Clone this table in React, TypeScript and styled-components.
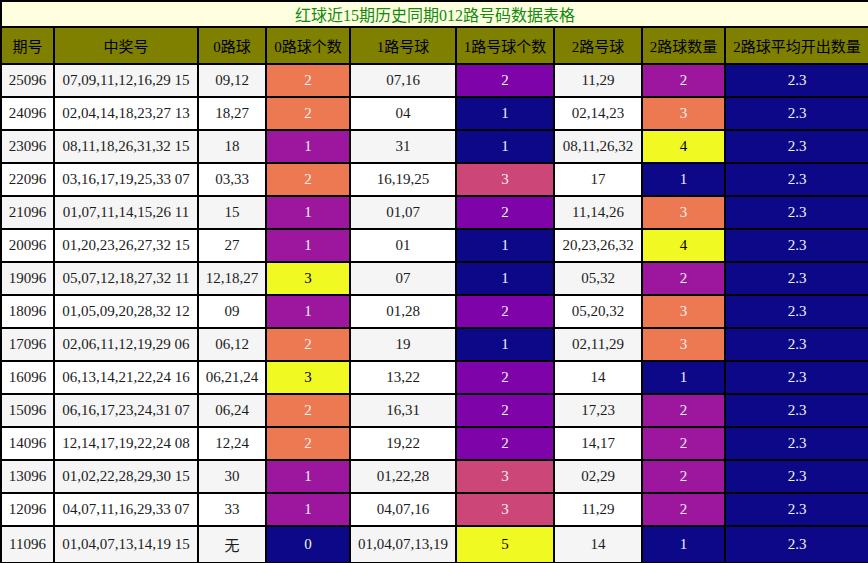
import React from "react";
import styled, { createGlobalStyle } from "styled-components";

const Global = createGlobalStyle`
  html, body { margin: 0; padding: 0; background: #ffffff; }
  body { font-family: "Liberation Serif", "Noto Sans CJK SC", serif; }
`;

const Table = styled.table`
  width: 868px;
  border-collapse: collapse;
  table-layout: fixed;
  font-family: "Liberation Serif", "Noto Sans CJK SC", serif;
  font-size: 15px;
`;

const Col = styled.col<{ $w: number }>`
  width: ${(p) => p.$w}px;
`;

const TitleCell = styled.th`
  border: 2px solid #000;
  background: #ffffe0;
  color: #108a10;
  font-size: 16px;
  font-weight: normal;
  padding: 0;
  text-align: center;
`;

const HeadCell = styled.th`
  border: 2px solid #000;
  background: #808000;
  color: #000;
  font-weight: normal;
  padding: 7px 0;
  text-align: center;
  white-space: nowrap;
`;

const Row = styled.tr<{ $alt: boolean; $tall?: boolean }>`
  height: ${(p) => (p.$tall ? 37 : 33)}px;
  background: ${(p) => (p.$alt ? "#f5f5f5" : "#ffffff")};
`;

const Cell = styled.td<{ $bg?: string; $fg?: string }>`
  border: 2px solid #000;
  padding: 0;
  text-align: center;
  white-space: nowrap;
  color: ${(p) => p.$fg || "#1c1c1c"};
  background: ${(p) => p.$bg || "transparent"};
`;

const PLASMA = {
  navy: "#0d0887",
  purple: "#7e03a8",
  magenta: "#9c179e",
  pink: "#cc4778",
  orange: "#ed7953",
  yellow: "#f0f921",
};

type Level = keyof typeof PLASMA;

function zeroColor(v: number): Level {
  return (["navy", "magenta", "orange", "yellow"] as Level[])[v];
}
function oneColor(v: number): Level {
  const m: Record<number, Level> = { 1: "navy", 2: "purple", 3: "pink", 4: "orange", 5: "yellow" };
  return m[v];
}
function twoColor(v: number): Level {
  const m: Record<number, Level> = { 1: "navy", 2: "magenta", 3: "orange", 4: "yellow" };
  return m[v];
}

type Rec = [string, string, string, number, string, number, string, number];

const data: Rec[] = [
  ["25096", "07,09,11,12,16,29 15", "09,12", 2, "07,16", 2, "11,29", 2],
  ["24096", "02,04,14,18,23,27 13", "18,27", 2, "04", 1, "02,14,23", 3],
  ["23096", "08,11,18,26,31,32 15", "18", 1, "31", 1, "08,11,26,32", 4],
  ["22096", "03,16,17,19,25,33 07", "03,33", 2, "16,19,25", 3, "17", 1],
  ["21096", "01,07,11,14,15,26 11", "15", 1, "01,07", 2, "11,14,26", 3],
  ["20096", "01,20,23,26,27,32 15", "27", 1, "01", 1, "20,23,26,32", 4],
  ["19096", "05,07,12,18,27,32 11", "12,18,27", 3, "07", 1, "05,32", 2],
  ["18096", "01,05,09,20,28,32 12", "09", 1, "01,28", 2, "05,20,32", 3],
  ["17096", "02,06,11,12,19,29 06", "06,12", 2, "19", 1, "02,11,29", 3],
  ["16096", "06,13,14,21,22,24 16", "06,21,24", 3, "13,22", 2, "14", 1],
  ["15096", "06,16,17,23,24,31 07", "06,24", 2, "16,31", 2, "17,23", 2],
  ["14096", "12,14,17,19,22,24 08", "12,24", 2, "19,22", 2, "14,17", 2],
  ["13096", "01,02,22,28,29,30 15", "30", 1, "01,22,28", 3, "02,29", 2],
  ["12096", "04,07,11,16,29,33 07", "33", 1, "04,07,16", 3, "11,29", 2],
  ["11096", "01,04,07,13,14,19 15", "无", 0, "01,04,07,13,19", 5, "14", 1],
];

const widths = [53, 144, 68, 84, 106, 98, 88, 83, 144];
const heads = ["期号", "中奖号", "0路球", "0路球个数", "1路号球", "1路号球个数", "2路号球", "2路球数量", "2路球平均开出数量"];

function Heat({ level, children }: { level: Level; children: React.ReactNode }) {
  return (
    <Cell $bg={PLASMA[level]} $fg={level === "yellow" ? "#000000" : "#f2f2f2"}>
      {children}
    </Cell>
  );
}

export default function App() {
  return (
    <>
      <Global />
      <Table>
        <colgroup>
          {widths.map((w, i) => (
            <Col key={i} $w={w} />
          ))}
        </colgroup>
        <thead>
          <tr>
            <TitleCell colSpan={9}>红球近15期历史同期012路号码数据表格</TitleCell>
          </tr>
          <tr>
            {heads.map((h) => (
              <HeadCell key={h}>{h}</HeadCell>
            ))}
          </tr>
        </thead>
        <tbody>
          {data.map((r, i) => (
            <Row key={r[0]} $alt={i % 2 === 0} $tall={r[2] === "无"}>
              <Cell>{r[0]}</Cell>
              <Cell>{r[1]}</Cell>
              <Cell>{r[2]}</Cell>
              <Heat level={zeroColor(r[3])}>{r[3]}</Heat>
              <Cell>{r[4]}</Cell>
              <Heat level={oneColor(r[5])}>{r[5]}</Heat>
              <Cell>{r[6]}</Cell>
              <Heat level={twoColor(r[7])}>{r[7]}</Heat>
              <Heat level="navy">2.3</Heat>
            </Row>
          ))}
        </tbody>
      </Table>
    </>
  );
}
